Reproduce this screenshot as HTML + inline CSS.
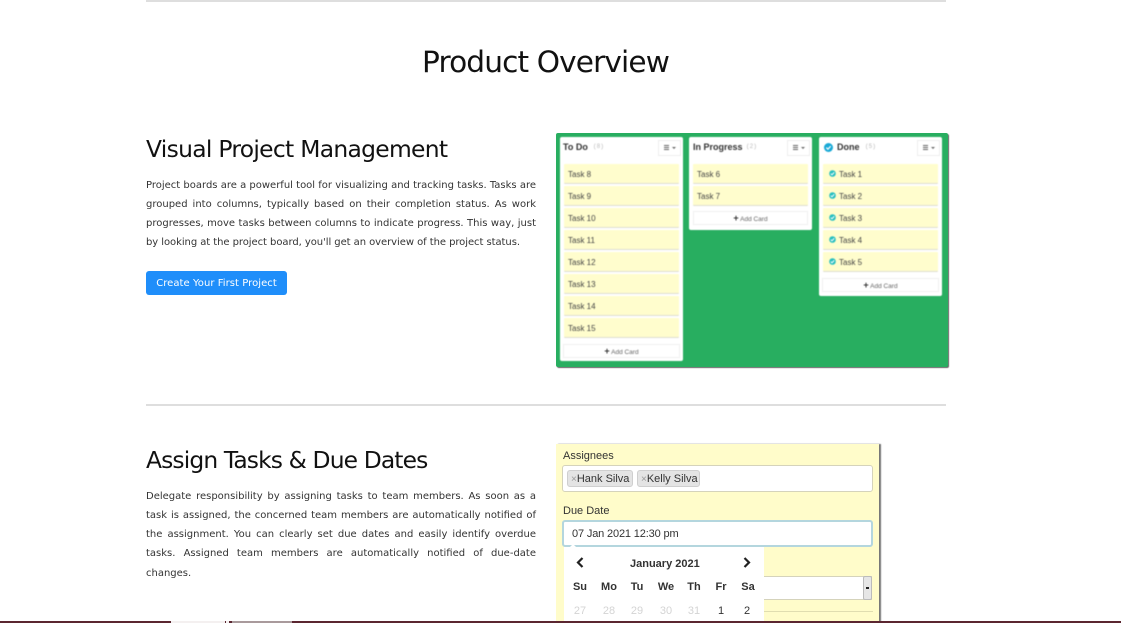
<!DOCTYPE html>
<html><head><meta charset="utf-8"><style>
html,body{margin:0;padding:0;background:#fff}
body{width:1121px;height:623px;position:relative;overflow:hidden;font-family:"DejaVu Sans","Liberation Sans",sans-serif}
.a{position:absolute}
.rule{position:absolute;left:146px;width:800px;height:2px;background:#dedede}
.h{position:absolute;white-space:nowrap;color:#111;font-weight:400}
.l{position:absolute;left:146px;width:390px;height:19px;line-height:19px;font-size:10px;color:#333;white-space:normal;text-align:justify;text-align-last:justify}
.l.n{text-align-last:left;white-space:nowrap}
.col{position:absolute;background:#fff;border-radius:2px}
.card{position:absolute;height:19px;background:#fffdcd;border-bottom:1px solid #dfdfd2;font:8px/21px "Liberation Sans",sans-serif;color:#444;text-indent:4px;border-radius:1px}
.title{position:absolute;font:bold 9px/12px "Liberation Sans",sans-serif;color:#333;white-space:nowrap}
.cnt{position:absolute;font:6px/12px "Liberation Mono",monospace;color:#bbb;white-space:nowrap}
.menu{position:absolute;width:21px;height:14px;background:#fff;border:1px solid #eee}
.menu:before{content:"";position:absolute;left:5px;top:4px;width:5px;height:1px;background:#666;box-shadow:0 2px 0 #666,0 4px 0 #666}
.menu:after{content:"";position:absolute;left:13px;top:6px;border:2px solid transparent;border-top:2px solid #666;border-bottom:0}
.add{position:absolute;height:14px;border:1px solid #f0f0f0;background:#fff;box-sizing:border-box;font:6.5px/13px "Liberation Sans",sans-serif;color:#666;text-align:center;white-space:nowrap}
.add b{color:#333;font-size:9px}
.chk{position:absolute}
.f{font-family:"Liberation Sans",sans-serif;color:#333;white-space:nowrap;position:absolute}
.tag{position:absolute;top:470px;height:17px;background:#e4e4e4;border:1px solid #cfcfcf;border-radius:3px;box-sizing:border-box;font:11px/16px "Liberation Sans",sans-serif;color:#333;padding-left:3px;white-space:nowrap}
.tag i{font-style:normal;color:#999;font-size:10px}
.d{position:absolute;width:30px;text-align:center;font:bold 11px/14px "Liberation Sans",sans-serif;color:#333}
.g{position:absolute;width:30px;text-align:center;font:11px/14px "Liberation Sans",sans-serif;color:#d4d4d4}
</style></head><body>
<div class="rule" style="top:0"></div>
<div class="h" style="left:422px;top:41px;font-size:29.6px;line-height:42px;letter-spacing:-.88px">Product Overview</div>
<div class="h" style="left:146px;top:132px;font-size:23.4px;line-height:34px;letter-spacing:-.7px">Visual Project Management</div>

<div class="l" style="top:176px">Project boards are a powerful tool for visualizing and tracking tasks. Tasks are</div>
<div class="l" style="top:195px">grouped into columns, typically based on their completion status. As work</div>
<div class="l" style="top:214px">progresses, move tasks between columns to indicate progress. This way, just</div>
<div class="l n" style="top:233px;letter-spacing:-.06px">by looking at the project board, you'll get an overview of the project status.</div>

<div class="a" style="left:146px;top:271px;width:141px;height:24px;background:#1f8efa;border-radius:3px;color:#fff;font-size:10px;line-height:26px;text-align:center;white-space:nowrap;letter-spacing:.05px">Create Your First Project</div>

<!-- board -->
<div class="a" style="left:556px;top:133px;width:392px;height:234px;background:#28ae60;border-radius:2px;box-shadow:1px 1px 1px #666"></div>
<div class="a" style="left:556px;top:133px;width:392px;height:234px;filter:blur(.4px)">
<div class="col" style="left:4px;top:4px;width:123px;height:224px"></div>
<div class="col" style="left:133px;top:4px;width:123px;height:93px"></div>
<div class="col" style="left:263px;top:4px;width:123px;height:159px"></div>

<div class="title" style="left:7px;top:8px">To Do</div><div class="cnt" style="left:37px;top:8px">(8)</div>
<div class="menu" style="left:102px;top:7px"></div>
<div class="title" style="left:137px;top:8px">In Progress</div><div class="cnt" style="left:190px;top:8px">(2)</div>
<div class="menu" style="left:231px;top:7px"></div>
<svg class="chk" style="left:268px;top:10px" width="9" height="9" viewBox="0 0 9 9"><circle cx="4.5" cy="4.5" r="4.5" fill="#19a9d6"/><path d="M2.3 4.6 L3.9 6.2 L6.7 3.2" fill="none" stroke="#fff" stroke-width="1.2"/></svg>
<div class="title" style="left:281px;top:8px">Done</div><div class="cnt" style="left:309px;top:8px">(5)</div>
<div class="menu" style="left:361px;top:7px"></div>

<div class="card" style="left:8px;top:31px;width:115px">Task 8</div>
<div class="card" style="left:8px;top:53px;width:115px">Task 9</div>
<div class="card" style="left:8px;top:75px;width:115px">Task 10</div>
<div class="card" style="left:8px;top:97px;width:115px">Task 11</div>
<div class="card" style="left:8px;top:119px;width:115px">Task 12</div>
<div class="card" style="left:8px;top:141px;width:115px">Task 13</div>
<div class="card" style="left:8px;top:163px;width:115px">Task 14</div>
<div class="card" style="left:8px;top:185px;width:115px">Task 15</div>
<div class="add" style="left:7px;top:211px;width:117px"><b>+</b> Add Card</div>

<div class="card" style="left:137px;top:31px;width:115px">Task 6</div>
<div class="card" style="left:137px;top:53px;width:115px">Task 7</div>
<div class="add" style="left:137px;top:78px;width:115px"><b>+</b> Add Card</div>

<div class="card" style="left:267px;top:31px;width:115px;text-indent:16px">Task 1</div>
<div class="card" style="left:267px;top:53px;width:115px;text-indent:16px">Task 2</div>
<div class="card" style="left:267px;top:75px;width:115px;text-indent:16px">Task 3</div>
<div class="card" style="left:267px;top:97px;width:115px;text-indent:16px">Task 4</div>
<div class="card" style="left:267px;top:119px;width:115px;text-indent:16px">Task 5</div>
<svg class="chk" style="left:273px;top:37px" width="7" height="100" viewBox="0 0 7 100">
<g id="k"><circle cx="3.5" cy="3.5" r="3.3" fill="#28bfc0"/><path d="M1.8 3.6 L3 4.8 L5.2 2.4" fill="none" stroke="#fff" stroke-width="1"/></g>
<g transform="translate(0,22)"><circle cx="3.5" cy="3.5" r="3.3" fill="#28bfc0"/><path d="M1.8 3.6 L3 4.8 L5.2 2.4" fill="none" stroke="#fff" stroke-width="1"/></g>
<g transform="translate(0,44)"><circle cx="3.5" cy="3.5" r="3.3" fill="#28bfc0"/><path d="M1.8 3.6 L3 4.8 L5.2 2.4" fill="none" stroke="#fff" stroke-width="1"/></g>
<g transform="translate(0,66)"><circle cx="3.5" cy="3.5" r="3.3" fill="#28bfc0"/><path d="M1.8 3.6 L3 4.8 L5.2 2.4" fill="none" stroke="#fff" stroke-width="1"/></g>
<g transform="translate(0,88)"><circle cx="3.5" cy="3.5" r="3.3" fill="#28bfc0"/><path d="M1.8 3.6 L3 4.8 L5.2 2.4" fill="none" stroke="#fff" stroke-width="1"/></g>
</svg>
<div class="add" style="left:266px;top:145px;width:117px"><b>+</b> Add Card</div>
</div>

<div class="rule" style="top:404px"></div>

<div class="h" style="left:146px;top:443px;font-size:23.4px;line-height:34px;letter-spacing:-.88px">Assign Tasks &amp; Due Dates</div>
<div class="l" style="top:487px">Delegate responsibility by assigning tasks to team members. As soon as a</div>
<div class="l" style="top:506px">task is assigned, the concerned team members are automatically notified of</div>
<div class="l" style="top:525px">the assignment. You can clearly set due dates and easily identify overdue</div>
<div class="l" style="top:544px">tasks. Assigned team members are automatically notified of due-date</div>
<div class="l n" style="top:564px">changes.</div>

<!-- form -->
<div class="a" style="left:556px;top:444px;width:323px;height:179px;background:#fffcca;box-shadow:2px 0 1px #777"></div>
<div class="f" style="left:563px;top:449px;font-size:11px;line-height:14px">Assignees</div>
<div class="a" style="left:562px;top:465px;width:311px;height:27px;background:#fff;border:1px solid #d5d3bb;border-radius:3px;box-sizing:border-box"></div>
<div class="tag" style="left:567px;width:66px"><i>×</i>Hank Silva</div>
<div class="tag" style="left:637px;width:63px"><i>×</i>Kelly Silva</div>
<div class="f" style="left:563px;top:504px;font-size:11px;line-height:14px">Due Date</div>
<div class="a" style="left:562px;top:520px;width:311px;height:27px;background:#fff;border:2px solid #b4d6de;border-radius:3px;box-sizing:border-box"></div>
<div class="f" style="left:572px;top:527px;font-size:11px;line-height:14px;letter-spacing:-.15px">07 Jan 2021 12:30 pm</div>

<div class="a" style="left:764px;top:576px;width:108px;height:24px;background:#fff;border:1px solid #d5d3bb;border-left:0;box-sizing:border-box"></div>
<div class="a" style="left:863px;top:576px;width:9px;height:24px;background:#e6e6e6;border:1px solid #bbb;border-radius:2px;box-sizing:border-box"></div>
<div class="a" style="left:866px;top:587px;width:3px;height:2px;background:#222"></div>
<div class="a" style="left:764px;top:611px;width:109px;height:1px;background:#e0ddb0"></div>

<!-- calendar -->
<div class="a" style="left:564px;top:547px;width:200px;height:76px;background:#fff"></div>
<div class="a" style="left:570px;top:544px;width:0;height:0;border:3px solid transparent;border-bottom-color:#fff;border-top:0"></div>
<svg class="a" style="left:574px;top:556px" width="12" height="13" viewBox="0 0 12 13"><path d="M8.5 2 L4 6.5 L8.5 11" fill="none" stroke="#222" stroke-width="2.2"/></svg>
<svg class="a" style="left:741px;top:556px" width="12" height="13" viewBox="0 0 12 13"><path d="M3.5 2 L8 6.5 L3.5 11" fill="none" stroke="#222" stroke-width="2.2"/></svg>
<div class="f" style="left:630px;top:557px;font-size:11px;line-height:14px;font-weight:bold">January 2021</div>
<div class="d" style="left:565px;top:580px">Su</div>
<div class="d" style="left:594px;top:580px">Mo</div>
<div class="d" style="left:622px;top:580px">Tu</div>
<div class="d" style="left:651px;top:580px">We</div>
<div class="d" style="left:679px;top:580px">Th</div>
<div class="d" style="left:706px;top:580px">Fr</div>
<div class="d" style="left:733px;top:580px">Sa</div>
<div class="g" style="left:565px;top:604px">27</div>
<div class="g" style="left:594px;top:604px">28</div>
<div class="g" style="left:622px;top:604px">29</div>
<div class="g" style="left:651px;top:604px">30</div>
<div class="g" style="left:679px;top:604px">31</div>
<div class="g" style="left:706px;top:604px;color:#333">1</div>
<div class="g" style="left:732px;top:604px;color:#333">2</div>

<!-- bottom bar -->
<div class="a" style="left:0;top:621px;width:1121px;height:2px;background:#5b2630"></div>
<div class="a" style="left:171px;top:621px;width:54px;height:2px;background:#f4f0f0"></div>
<div class="a" style="left:226px;top:621px;width:3px;height:2px;background:#f4f0f0"></div>
<div class="a" style="left:232px;top:621px;width:60px;height:2px;background:#a99a9c"></div>
</body></html>
